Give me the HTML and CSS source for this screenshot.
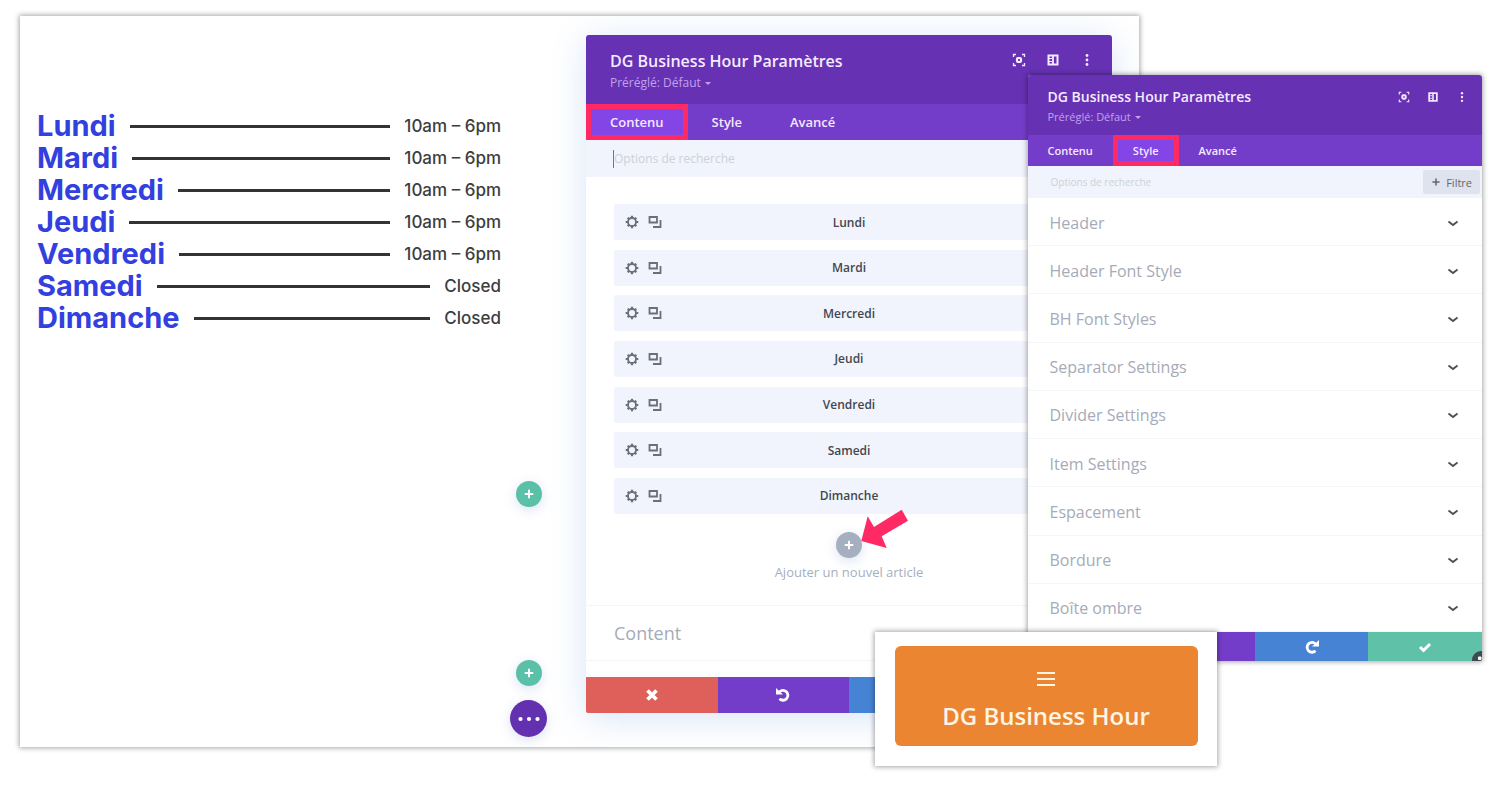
FILE: index.html
```html
<!DOCTYPE html>
<html lang="fr">
<head>
<meta charset="utf-8">
<meta name="viewport" content="width=device-width, initial-scale=1">
<title>DG Business Hour</title>
<link rel="stylesheet" href="styles.css">
</head>
<body>
<svg class="sprite" aria-hidden="true">
  <symbol id="focus" viewBox="0 0 14 14"><path d="M1.500 4V1.500H4M10 1.500h2.500V4M12.500 10v2.500H10M4 12.500H1.500V10" fill="none" stroke="currentColor" stroke-width="1.300"/><rect x="5" y="5" width="4" height="4" rx="1" fill="none" stroke="currentColor" stroke-width="2.200"/></symbol>
  <symbol id="layout" viewBox="0 0 14 14"><rect x="2.500" y="2.500" width="9" height="9" fill="none" stroke="currentColor" stroke-width="2"/><path d="M7 2v10" stroke="currentColor" stroke-width="1.800"/><path d="M3 5.500h3M3 8.500h3" stroke="currentColor" stroke-width="1"/></symbol>
  <symbol id="dots" viewBox="0 0 14 14"><g fill="currentColor"><circle cx="7" cy="2.500" r="1.400"/><circle cx="7" cy="7" r="1.400"/><circle cx="7" cy="11.500" r="1.400"/></g></symbol>
  <symbol id="gear" viewBox="0 0 14 14"><circle cx="7" cy="7" r="4" fill="none" stroke="currentColor" stroke-width="1.800"/><path d="M7 .7v2.300M7 11v2.300M.7 7H3M11 7h2.300M2.700 2.700l1.400 1.400M9.900 9.900l1.400 1.400M2.700 11.300l1.400-1.400M9.900 4.100l1.400-1.400" stroke="currentColor" stroke-width="2.200"/></symbol>
  <symbol id="copy" viewBox="0 0 14 14"><path d="M1.500 2h7.500v5.500H1.500zM12.500 5v7H5" fill="none" stroke="currentColor" stroke-width="1.800"/></symbol>
  <symbol id="plus" viewBox="0 0 14 14"><path d="M7 2v10M2 7h10" stroke="currentColor" stroke-width="2.200"/></symbol>
  <symbol id="cross" viewBox="0 0 14 14"><path d="M2.500 2.500l9 9M11.500 2.500l-9 9" stroke="currentColor" stroke-width="3.800"/></symbol>
  <symbol id="undo" viewBox="0 0 14 14"><path d="M3.200 4.200A4.900 4.900 0 1 1 3.500 10.800" fill="none" stroke="currentColor" stroke-width="2.800"/><path d="M0 0l7 6.500H0z" fill="currentColor"/></symbol>
  <symbol id="redo" viewBox="0 0 14 14"><path d="M10.800 4.200A4.900 4.900 0 1 0 10.500 10.800" fill="none" stroke="currentColor" stroke-width="2.800"/><path d="M14 0L7 6.500H14z" fill="currentColor"/></symbol>
  <symbol id="check" viewBox="0 0 14 14"><path d="M2 7l3.500 3.500L12 4" fill="none" stroke="currentColor" stroke-width="3"/></symbol>
  <symbol id="chevron" viewBox="0 0 14 14"><path d="M2.500 5.500L7 9l4.500-3.500" fill="none" stroke="currentColor" stroke-width="1.800"/></symbol>
  <symbol id="more" viewBox="0 0 24 8"><g fill="currentColor"><circle cx="3.500" cy="4" r="2.100"/><circle cx="12" cy="4" r="2.100"/><circle cx="20.500" cy="4" r="2.100"/></g></symbol>
</svg>
<main class="stage">
  <section class="board">
    <dl class="hours">
      <div class="hours-row"><dt>Lundi</dt><dd>10am – 6pm</dd></div>
      <div class="hours-row"><dt>Mardi</dt><dd>10am – 6pm</dd></div>
      <div class="hours-row"><dt>Mercredi</dt><dd>10am – 6pm</dd></div>
      <div class="hours-row"><dt>Jeudi</dt><dd>10am – 6pm</dd></div>
      <div class="hours-row"><dt>Vendredi</dt><dd>10am – 6pm</dd></div>
      <div class="hours-row"><dt>Samedi</dt><dd>Closed</dd></div>
      <div class="hours-row"><dt>Dimanche</dt><dd>Closed</dd></div>
    </dl>
    <div class="builder">
      <button class="round round-green round-first" aria-label="Ajouter une ligne"><svg class="icon"><use href="#plus"/></svg></button>
      <button class="round round-green" aria-label="Ajouter une section"><svg class="icon"><use href="#plus"/></svg></button>
      <button class="round round-menu" aria-label="Menu"><svg class="icon-more"><use href="#more"/></svg></button>
    </div>
    <section class="panel panel-large">
      <header class="panel-head">
        <div class="panel-titles">
          <h2 class="panel-title">DG Business Hour Paramètres</h2>
          <button class="preset">Préréglé: Défaut <span class="caret"></span></button>
        </div>
        <div class="tools">
          <button aria-label="Agrandir"><svg class="icon"><use href="#focus"/></svg></button>
          <button aria-label="Ancrer"><svg class="icon"><use href="#layout"/></svg></button>
          <button aria-label="Plus"><svg class="icon"><use href="#dots"/></svg></button>
        </div>
      </header>
      <nav class="tabs">
        <button class="tab tab-active">Contenu</button><button class="tab">Style</button><button class="tab">Avancé</button>
      </nav>
      <div class="search"><input class="search-input search-focus" type="text" aria-label="Options de recherche" placeholder="Options de recherche"></div>
      <ul class="items">
        <li class="item"><button aria-label="Réglages"><svg class="icon"><use href="#gear"/></svg></button><button aria-label="Dupliquer"><svg class="icon"><use href="#copy"/></svg></button><span class="item-name">Lundi</span></li>
        <li class="item"><button aria-label="Réglages"><svg class="icon"><use href="#gear"/></svg></button><button aria-label="Dupliquer"><svg class="icon"><use href="#copy"/></svg></button><span class="item-name">Mardi</span></li>
        <li class="item"><button aria-label="Réglages"><svg class="icon"><use href="#gear"/></svg></button><button aria-label="Dupliquer"><svg class="icon"><use href="#copy"/></svg></button><span class="item-name">Mercredi</span></li>
        <li class="item"><button aria-label="Réglages"><svg class="icon"><use href="#gear"/></svg></button><button aria-label="Dupliquer"><svg class="icon"><use href="#copy"/></svg></button><span class="item-name">Jeudi</span></li>
        <li class="item"><button aria-label="Réglages"><svg class="icon"><use href="#gear"/></svg></button><button aria-label="Dupliquer"><svg class="icon"><use href="#copy"/></svg></button><span class="item-name">Vendredi</span></li>
        <li class="item"><button aria-label="Réglages"><svg class="icon"><use href="#gear"/></svg></button><button aria-label="Dupliquer"><svg class="icon"><use href="#copy"/></svg></button><span class="item-name">Samedi</span></li>
        <li class="item"><button aria-label="Réglages"><svg class="icon"><use href="#gear"/></svg></button><button aria-label="Dupliquer"><svg class="icon"><use href="#copy"/></svg></button><span class="item-name">Dimanche</span></li>
      </ul>
      <div class="add">
        <div class="add-spot">
          <button class="round round-grey" aria-labelledby="add-label"><svg class="icon"><use href="#plus"/></svg></button>
          <svg class="arrow" viewBox="0 0 47 39" aria-hidden="true"><path d="M40.700 .7L47 11.700 20.700 27.300 25.700 39 .3 32 6.700 7.300 13 18z" fill="#ff2a63"/></svg>
        </div>
        <span id="add-label" class="add-label">Ajouter un nouvel article</span>
      </div>
      <button class="group">Content</button>
      <footer class="actions">
        <button class="act act-red" aria-label="Annuler"><svg class="icon"><use href="#cross"/></svg></button>
        <button class="act act-purple" aria-label="Défaire"><svg class="icon"><use href="#undo"/></svg></button>
        <button class="act act-blue" aria-label="Refaire"><svg class="icon"><use href="#redo"/></svg></button>
        <button class="act act-green" aria-label="Enregistrer"><svg class="icon"><use href="#check"/></svg></button>
      </footer>
    </section>
  </section>

  <section class="panel panel-small">
    <header class="panel-head">
      <div class="panel-titles">
        <h2 class="panel-title">DG Business Hour Paramètres</h2>
        <button class="preset">Préréglé: Défaut <span class="caret"></span></button>
      </div>
      <div class="tools">
        <button aria-label="Agrandir"><svg class="icon"><use href="#focus"/></svg></button>
        <button aria-label="Ancrer"><svg class="icon"><use href="#layout"/></svg></button>
        <button aria-label="Plus"><svg class="icon"><use href="#dots"/></svg></button>
      </div>
    </header>
    <nav class="tabs">
      <button class="tab">Contenu</button><button class="tab tab-active">Style</button><button class="tab">Avancé</button>
    </nav>
    <div class="search"><input class="search-input" type="text" aria-label="Options de recherche" placeholder="Options de recherche"><button class="filter"><svg class="icon"><use href="#plus"/></svg>Filtre</button></div>
    <div class="sections">
      <button class="section">Header<svg class="icon"><use href="#chevron"/></svg></button>
      <button class="section">Header Font Style<svg class="icon"><use href="#chevron"/></svg></button>
      <button class="section">BH Font Styles<svg class="icon"><use href="#chevron"/></svg></button>
      <button class="section">Separator Settings<svg class="icon"><use href="#chevron"/></svg></button>
      <button class="section">Divider Settings<svg class="icon"><use href="#chevron"/></svg></button>
      <button class="section">Item Settings<svg class="icon"><use href="#chevron"/></svg></button>
      <button class="section">Espacement<svg class="icon"><use href="#chevron"/></svg></button>
      <button class="section">Bordure<svg class="icon"><use href="#chevron"/></svg></button>
      <button class="section">Boîte ombre<svg class="icon"><use href="#chevron"/></svg></button>
    </div>
    <footer class="actions">
      <button class="act act-red" aria-label="Annuler"><svg class="icon"><use href="#cross"/></svg></button>
      <button class="act act-purple" aria-label="Défaire"><svg class="icon"><use href="#undo"/></svg></button>
      <button class="act act-blue" aria-label="Refaire"><svg class="icon"><use href="#redo"/></svg></button>
      <button class="act act-green" aria-label="Enregistrer"><svg class="icon"><use href="#check"/></svg></button>
      <svg class="grip" viewBox="0 0 10 11" aria-hidden="true"><circle cx="9" cy="10" r="9" fill="#3e4a50"/><path d="M6.500 7h2.500v2.500H6.500z" fill="#fff" stroke="#fff"/></svg>
    </footer>
  </section>

  <section class="module-card">
    <button class="module"><svg class="burger" viewBox="0 0 20 14" aria-hidden="true"><path d="M1 1h18M1 7h18M1 13h18" stroke="currentColor" stroke-width="2"/></svg>DG Business Hour</button>
  </section>
</main>
</body>
</html>
```

FILE: styles.css
```css
* { box-sizing: border-box; }
body { margin: 0; background: #fff; font-family: "Open Sans", sans-serif; color: #4c5866; }
button { font: inherit; color: inherit; background: none; border: 0; padding: 0; margin: 0; }
h2, dl, dd, ul { margin: 0; padding: 0; }
.sprite { display: none; }
.icon { display: block; width: 14px; height: 14px; flex: none; }

.stage { position: relative; min-height: 785px; padding-top: 16px; }
.board {
  display: grid;
  grid-template-columns: minmax(0, 481fr) 46px minmax(0, 565fr);
  align-items: start;
  width: 74.6%;
  margin-left: 20px;
  padding: 19px 27px 10px 0;
  overflow: clip;
  background: #fff;
}

.hours { padding: 75px 0 0 17px; }
.hours-row { display: flex; align-items: center; height: 32px; }
.hours-row::before { content: ""; order: 1; flex: 1; height: 3px; margin: 0 14px; background: #333; }
.hours dt { font: bold 29px/32px Inter, sans-serif; color: #3340e0; }
.hours dd { order: 2; font: 500 17px/32px Inter, sans-serif; color: #3d3d3d; }

.builder { display: flex; flex-direction: column; align-items: center; align-self: end; gap: 14px; padding-left: 9px; }
.round { display: flex; align-items: center; justify-content: center; width: 26px; height: 26px; border-radius: 50%; color: #fff; box-shadow: 0 3px 12px rgba(70, 110, 200, .2); }
.round .icon { width: 12px; height: 12px; }
.round-green { background: #5bc0a8; }
.round-first { margin-bottom: 139px; }
.round-menu { width: 37px; height: 37px; background: #6330b0; }
.icon-more { width: 24px; height: 8px; }
.round-grey { background: #a5afbf; }

.panel { border-radius: 3px 3px 2px 2px; background: #fff; }
.panel-large { margin: 0 0 24px 39px; box-shadow: 0 5px 36px rgba(60, 125, 220, .2); }
.panel-head { display: flex; justify-content: space-between; align-items: flex-start; height: 69px; padding: 14px 18px 0 24px; border-radius: 3px 3px 0 0; background: #6631b3; color: #f5ebff; }
.panel-title { font-size: 16px; line-height: 24px; font-weight: 600; white-space: nowrap; }
.preset { display: flex; align-items: center; gap: 4px; font-size: 12px; line-height: 20px; font-weight: 500; color: #c3a1ed; }
.caret { border: 3px solid transparent; border-top-color: currentColor; border-bottom: 0; }
.tools { display: flex; gap: 20px; padding-top: 4px; }
.tabs { display: flex; height: 36px; background: #743dc9; color: #f5e8ff; }
.tab { padding: 0 24px; font-size: 13px; font-weight: 600; }
.tab-active { background: #8445e6; box-shadow: inset 0 0 0 5px #ff2a63; }
.search { display: flex; align-items: center; height: 37px; padding: 0 2px 0 27px; background: #f1f4fc; }
.search-input { flex: 1; min-width: 0; height: 18px; padding: 0; border: 0; border-left: 1px solid transparent; outline: 0; background: none; font: 500 12px/18px "Open Sans", sans-serif; color: #4c5866; }
.search-focus { border-left-color: #777; }
.search-input::placeholder { color: #cdd1d8; opacity: 1; }

.items { display: flex; flex-direction: column; justify-content: space-between; min-height: 310px; margin: 27px 28px 0; list-style: none; }
.item { display: flex; align-items: center; gap: 9px; height: 36px; padding-left: 11px; border-radius: 2px; background: #f1f4fc; color: #6a6f78; }
.item-name { flex: 1; padding-right: 57px; text-align: center; font-size: 12px; font-weight: 600; color: #434750; }
.add { display: flex; flex-direction: column; align-items: center; padding: 18px 0 23px; }
.add-spot { position: relative; }
.arrow { position: absolute; left: 25px; top: -23px; width: 47px; height: 39px; }
.add-label { margin-top: 4px; font-size: 13px; line-height: 20px; font-weight: 500; color: #a5afbf; }
.group { display: block; width: 100%; height: 56px; margin-bottom: 16px; padding: 0 28px; border: solid #f4f5f8; border-width: 1px 0; text-align: left; font-size: 18px; color: #a5abb8; }
.actions { position: relative; display: grid; grid-template-columns: repeat(4, 1fr); height: 36px; border-radius: 0 0 2px 2px; overflow: hidden; color: #fff; }
.act { display: flex; align-items: center; justify-content: center; }
.act-red { background: #df5f5b; }
.act-purple { background: #743dc9; }
.act-blue { background: #4783d4; }
.act-green { background: #60c1a9; }

.panel-small { position: absolute; left: 68.5%; top: 75px; width: 30.3%; }
.panel-small .panel-head { height: 60px; padding: 12px 14px 0 20px; }
.panel-small .panel-title { font-size: 14px; line-height: 20px; }
.panel-small .preset { font-size: 11px; font-weight: 400; }
.panel-small .tools { gap: 17px; padding-top: 4px; }
.panel-small .tools .icon { width: 12px; height: 12px; }
.panel-small .tabs { height: 31px; }
.panel-small .tab { padding: 0 20px; font-size: 11px; }
.panel-small .search { height: 32px; padding-left: 22px; }
.panel-small .search-input { font-size: 10px; }
.filter { display: flex; align-items: center; gap: 5px; height: 24px; padding: 0 8px; border-radius: 2px; background: #dfe3ed; font-size: 11px; font-weight: 500; color: #626873; }
.filter .icon { width: 10px; height: 10px; }
.sections { display: grid; grid-auto-rows: 1fr; min-height: 434px; }
.section { display: flex; align-items: center; justify-content: space-between; padding: 2px 22px 0; border-bottom: 1px solid #f4f5f8; font-size: 16px; color: #a5abb8; }
.section .icon { color: #4b5057; }
.panel-small .actions { height: 29px; }
.grip { position: absolute; right: 0; bottom: 0; width: 10px; height: 11px; }

.module-card { position: absolute; left: 58.3%; top: 632px; width: 22.8%; padding: 14px 19px 20px 20px; background: #fff; }
.module { display: flex; flex-direction: column; align-items: center; gap: 14px; width: 100%; padding: 26px 0 14px; border-radius: 6px; background: #eb8532; color: #fff5e2; font-size: 24px; line-height: 32px; font-weight: 600; }
.burger { width: 20px; height: 14px; }

.board, .panel-small, .module-card { box-shadow: 0 0 5px 1px rgba(0, 0, 0, .35); }
```
